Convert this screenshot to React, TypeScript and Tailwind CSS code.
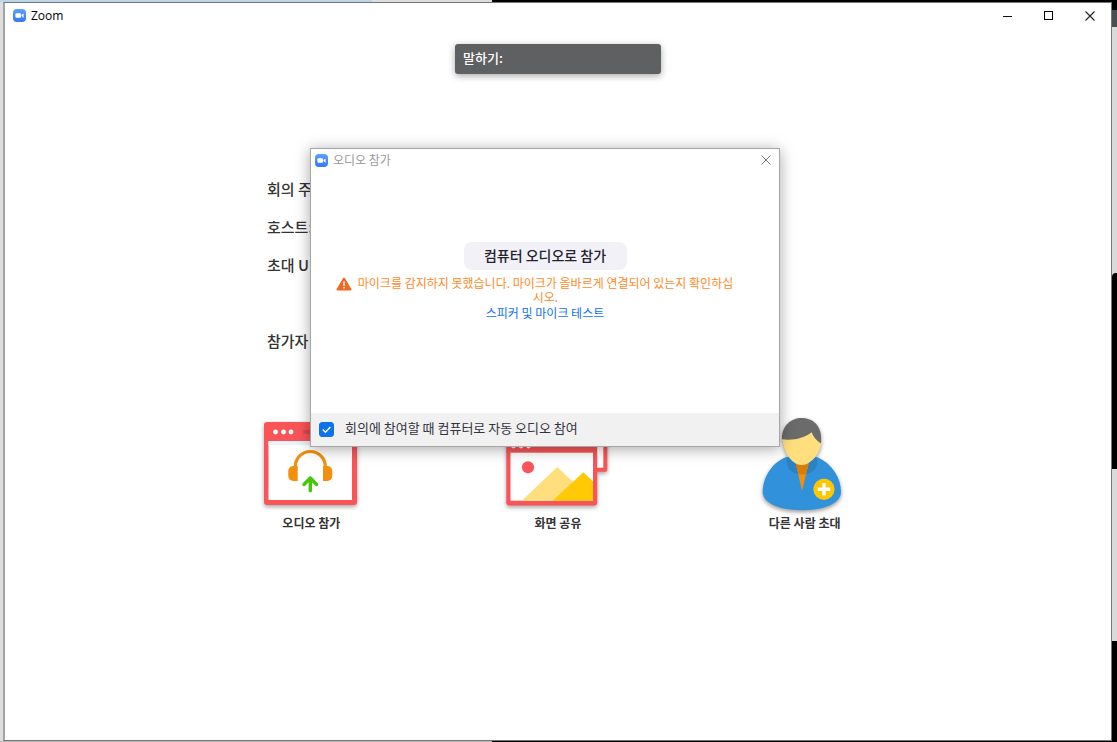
import { useState, type ReactNode } from "react";
import clsx from "clsx";

function ZoomLogo() {
  return (
    <svg viewBox="0 0 13 13" className="size-[13px] shrink-0" aria-hidden="true">
      <defs>
        <linearGradient id="logo" x1="0" y1="0" x2="0" y2="1">
          <stop offset="0" stopColor="#5aa0ff" />
          <stop offset="1" stopColor="#3478f6" />
        </linearGradient>
      </defs>
      <rect width="13" height="13" rx="4" fill="url(#logo)" />
      <rect x="2.4" y="4.3" width="5.6" height="4.5" rx="1" fill="#fff" />
      <path d="M8.5 6 10.6 4.4V8.7L8.5 7.1Z" fill="#fff" />
    </svg>
  );
}

function AudioIcon() {
  return (
    <svg viewBox="0 0 110 100" className="h-[100px] w-[110px] drop-shadow-[0_2px_2px_rgba(0,0,0,0.35)]" aria-hidden="true">
      <rect x="8" y="10" width="93" height="83" rx="3" fill="#fb5458" />
      <rect x="12.5" y="29" width="83.5" height="59" fill="#fff" />
      <rect x="12.5" y="29" width="83.5" height="4" fill="#eaf3fa" />
      <circle cx="19.5" cy="20" r="2.4" fill="#fff" />
      <circle cx="27.5" cy="20" r="2.4" fill="#fff" />
      <circle cx="35" cy="20" r="2.4" fill="#fff" />
      <rect x="47" y="18" width="48" height="4" rx="2" fill="#e0484d" />
      <path d="M39.3 60V54.5a15 15 0 0 1 30 0V60" fill="none" stroke="#f28f0c" strokeWidth="3.2" />
      <path d="M41.7 54V69H37.3a5 5 0 0 1-5-5V59a5 5 0 0 1 5-5Z" fill="#f28f0c" />
      <path d="M67 54V69H71.3a5 5 0 0 0 5-5V59a5 5 0 0 0-5-5Z" fill="#f28f0c" />
      <path
        d="M48 72.5 54.3 66 60.6 72.5M54.3 66V78.7"
        fill="none"
        stroke="#46c80a"
        strokeWidth="3.4"
        strokeLinecap="round"
        strokeLinejoin="round"
      />
    </svg>
  );
}

function ShareIcon() {
  return (
    <svg viewBox="1 0 110 100" className="h-[100px] w-[110px] drop-shadow-[0_2px_2px_rgba(0,0,0,0.35)]" aria-hidden="true">
      <rect x="16" y="10" width="89.3" height="49.7" rx="2" fill="#fb5458" />
      <rect x="20" y="20" width="81.3" height="35.7" fill="#fff" />
      <rect x="4.3" y="26" width="90.9" height="67.5" rx="3" fill="#fb5458" />
      <rect x="8.5" y="40.7" width="82.5" height="48" fill="#fff" />
      <circle cx="11.5" cy="34" r="2.4" fill="#fff" />
      <circle cx="19" cy="34" r="2.4" fill="#fff" />
      <circle cx="26.5" cy="34" r="2.4" fill="#fff" />
      <circle cx="26" cy="55.3" r="6.1" fill="#fb5458" />
      <path d="M19.7 88.7 55.3 55 91 88.7Z" fill="#ffdf7d" />
      <path d="M50.7 88.7 81.3 60.3 91 69.5V88.7Z" fill="#ffca05" />
    </svg>
  );
}

function InviteIcon() {
  return (
    <svg viewBox="1 0 110 100" className="h-[100px] w-[110px] drop-shadow-[0_2px_2px_rgba(0,0,0,0.4)]" aria-hidden="true">
      <path
        d="M37 45C21 52 13.7 67 13.7 80C13.7 92 33 98.3 53 98.3C73 98.3 92 92 92 80C92 67 84 52 68 45Z"
        fill="#3192db"
      />
      <path d="M38 46C36 56 43 62.5 53 62.5C63 62.5 70 56 68 46Z" fill="#2b81c1" />
      <path d="M46.5 50 53 79 60 50Z" fill="#f28f0c" />
      <path d="M46.5 50 49.3 62C52 62.7 55 62.6 57.2 62L60 50Z" fill="#d67e09" />
      <path d="M33.3 24C33.3 40 43 53 52.7 53C62.5 53 72.3 40 72.3 28C72 14 64 9 52.7 9C42 9 34 14 33.3 24Z" fill="#ffdf7d" />
      <path
        d="M33 27.3C32.5 14 42 6 52.7 6C65 6 74 15 72 31.5C67 28.5 64 24.5 62.7 20.3C55 26.5 44 28.7 33 27.3Z"
        fill="#6b6b6b"
      />
      <circle cx="75" cy="77.3" r="10.6" fill="#fec700" />
      <path d="M75 71V83.6M68.7 77.3H81.3" stroke="#fff" strokeWidth="3.4" />
    </svg>
  );
}

const meetingInfo = [
  { label: "회의 주제:" },
  { label: "호스트:" },
  { label: "초대 URL:" },
  { label: "참가자 ID:", spaced: true },
];

const actions: { label: string; icon: ReactNode }[] = [
  { label: "오디오 참가", icon: <AudioIcon /> },
  { label: "화면 공유", icon: <ShareIcon /> },
  { label: "다른 사람 초대", icon: <InviteIcon /> },
];

function AudioDialog() {
  const [autoJoin, setAutoJoin] = useState(true);

  return (
    <div
      role="dialog"
      aria-labelledby="audio-title"
      className="absolute top-[145px] left-1/2 -ml-[248px] flex h-[299px] w-[470px] flex-col border border-[#a6a6a6] bg-white shadow-[0_2px_14px_rgba(0,0,0,0.35)]"
    >
      <header className="flex h-[22px] items-center gap-[5px] pr-[7px] pl-1">
        <ZoomLogo />
        <h2 id="audio-title" className="flex-1 text-xs leading-4 text-[#999999]">
          오디오 참가
        </h2>
        <button type="button" aria-label="닫기">
          <svg viewBox="0 0 12 12" className="size-3" aria-hidden="true">
            <path d="M1.5 1.5 10.5 10.5M10.5 1.5 1.5 10.5" stroke="#777" strokeWidth="1" />
          </svg>
        </button>
      </header>

      <div className="flex flex-1 flex-col items-center pt-[71px]">
        <button
          type="button"
          className="h-7 w-[163px] rounded-lg bg-[#f2f1f7] pb-[2px] text-sm leading-[26px] font-medium text-[#222230]"
        >
          컴퓨터 오디오로 참가
        </button>
        <div className="mt-[6px] flex w-full items-start gap-1 pr-11 pl-[25px]">
          <svg viewBox="0 0 16 14" className="mt-[1px] h-[14px] w-4 shrink-0" aria-hidden="true">
            <path d="M8 1.5 14.5 12.5H1.5Z" fill="#f26a21" stroke="#f26a21" strokeWidth="2" strokeLinejoin="round" />
            <path d="M8 4.2V8.8M8 10V11.6" stroke="#fff" strokeWidth="1.5" />
          </svg>
          <p className="flex-1 text-center text-xs leading-[14px] text-[#ff8a1f]">
            마이크를 감지하지 못했습니다. 마이크가 올바르게 연결되어 있는지 확인하십시오.
          </p>
        </div>
        <a href="#test" className="mt-px text-xs leading-4 text-[#0e72ed]">
          스피커 및 마이크 테스트
        </a>
      </div>

      <footer className="flex h-[33px] items-center bg-[#f1f1f1] pl-2">
        <label className="flex items-center gap-[11px] text-[13px] leading-5 text-[#333340]">
          <span className="relative size-[15px]">
            <input
              type="checkbox"
              checked={autoJoin}
              onChange={(e) => setAutoJoin(e.target.checked)}
              className="block size-[15px] appearance-none rounded-[3px] border border-[#0e72ed] bg-white checked:bg-[#0e72ed]"
            />
            {autoJoin && (
              <svg viewBox="0 0 15 15" className="pointer-events-none absolute inset-0 size-[15px]" aria-hidden="true">
                <path d="M3.8 7.6 6.4 10.2 11.4 4.9" fill="none" stroke="#fff" strokeWidth="1.4" />
              </svg>
            )}
          </span>
          <span className="pb-[3px]">회의에 참여할 때 컴퓨터로 자동 오디오 참여</span>
        </label>
      </footer>
    </div>
  );
}

export default function App() {
  return (
    <div className="flex h-screen min-h-[600px] flex-col bg-[#dedede] font-['Noto_Sans_CJK_KR',sans-serif]">
      <div className="flex h-[2px]">
        <div className="w-1/3 bg-[#b9d6ea]" />
        <div className="w-[120px] bg-[#dedede]" />
        <div className="flex-1 bg-black" />
      </div>

      <div className="flex min-h-0 flex-1">
        <div className="w-[3px] bg-[#dedede]" />
        <main className="relative flex-1 border border-l-2 border-[#757575] border-l-[#a3a3a3] bg-white">
          <header className="flex h-[25px] items-center gap-[5px] pl-2">
            <ZoomLogo />
            <h1 className="flex-1 font-['Open_Sans','Noto_Sans_CJK_KR',sans-serif] text-xs leading-4 text-black">
              Zoom
            </h1>
            <div className="flex items-center gap-[29px] pr-[15px]">
              <button type="button" aria-label="최소화">
                <svg viewBox="0 0 12 12" className="size-3" shapeRendering="crispEdges" aria-hidden="true">
                  <path d="M1 6.5H10" stroke="#111" />
                </svg>
              </button>
              <button type="button" aria-label="최대화">
                <svg viewBox="0 0 12 12" className="size-3" shapeRendering="crispEdges" aria-hidden="true">
                  <rect x="1.5" y="1.5" width="8" height="8" fill="none" stroke="#000" />
                </svg>
              </button>
              <button type="button" aria-label="닫기">
                <svg viewBox="0 0 12 12" className="size-3" aria-hidden="true">
                  <path d="M1.5 1.5 10.5 10.5M10.5 1.5 1.5 10.5" stroke="#222" strokeWidth="1.1" />
                </svg>
              </button>
            </div>
          </header>

          <div className="mx-auto mt-4 h-[30px] w-[206px] rounded-[3px] bg-[#5f6061] px-2 text-[13px] leading-7 font-medium text-white shadow-[0_2px_7px_rgba(0,0,0,0.35)]">
            말하기:
          </div>

          <div className="mx-auto mt-[96px] max-w-[740px]">
            <ul className="flex flex-col pl-[79px]">
              {meetingInfo.map(({ label, spaced }) => (
                <li
                  key={label}
                  className={clsx("h-[38px] text-[15px] leading-[38px] font-medium text-[#333333]", spaced && "mt-[38px]")}
                >
                  {label}
                </li>
              ))}
            </ul>
            <div className="mt-[52px] grid grid-cols-3">
              {actions.map(({ label, icon }) => (
                <button key={label} type="button" className="flex flex-col items-center gap-[3px]">
                  {icon}
                  <span className="text-xs leading-4 font-bold text-[#333333]">{label}</span>
                </button>
              ))}
            </div>
          </div>

          <AudioDialog />
        </main>
        <div className="flex w-[5px] flex-col">
          <div className="h-2 bg-black" />
          <div className="h-[17px] bg-[#465053]" />
          <div className="flex-246 bg-[#dadada]" />
          <div className="flex-196 rounded-tl bg-black" />
          <div className="flex-172 bg-[#dadada]" />
          <div className="flex-100 bg-black" />
        </div>
      </div>

      <div className="flex h-px">
        <div className="w-[492px] bg-[#b5b5b5]" />
        <div className="flex-1 bg-black" />
      </div>
    </div>
  );
}
